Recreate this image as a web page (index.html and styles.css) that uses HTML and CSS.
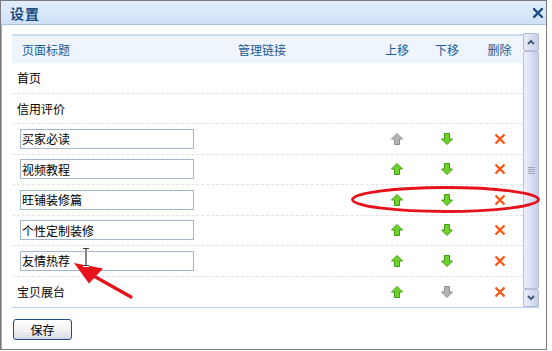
FILE: index.html
```html
<!DOCTYPE html>
<html lang="zh-CN">
<head>
<meta charset="utf-8">
<title>设置</title>
<link rel="stylesheet" href="styles.css">
</head>
<body>
<div class="dialog">
  <div class="titlebar">
    <span class="title">设置</span>
    <svg class="close" width="10" height="10" viewBox="0 0 10 10"><path d="M1 1 L9 9 M9 1 L1 9" stroke="#1d4d84" stroke-width="2.4" stroke-linecap="square"/></svg>
  </div>
  <div class="panel">
    <div class="table">
      <div class="header">
        <span class="h-title">页面标题</span>
        <span class="h-link">管理链接</span>
        <span class="c">上移</span>
        <span class="c">下移</span>
        <span class="c del">删除</span>
      </div>
      <div class="row"><span class="txt">首页</span></div>
      <div class="row"><span class="txt">信用评价</span></div>
      <div class="row">
        <span><input class="field" value="买家必读"></span><span></span>
        <span class="c"><svg class="ico" viewBox="0 0 12 12"><path class="up gray" d="M6 0.5 L11.5 6 L8.5 6 L8.5 11.5 L3.5 11.5 L3.5 6 L0.5 6 Z"/></svg></span>
        <span class="c"><svg class="ico" viewBox="0 0 12 12"><path class="dn green" d="M3.5 0.5 L8.5 0.5 L8.5 6 L11.5 6 L6 11.5 L0.5 6 L3.5 6 Z"/></svg></span>
        <span class="c del"><svg class="ico" viewBox="0 0 12 12"><path class="x" d="M1.5 1.5 L10.5 10.5 M10.5 1.5 L1.5 10.5"/></svg></span>
      </div>
      <div class="row">
        <span><input class="field" value="视频教程"></span><span></span>
        <span class="c"><svg class="ico" viewBox="0 0 12 12"><path class="up green" d="M6 0.5 L11.5 6 L8.5 6 L8.5 11.5 L3.5 11.5 L3.5 6 L0.5 6 Z"/></svg></span>
        <span class="c"><svg class="ico" viewBox="0 0 12 12"><path class="dn green" d="M3.5 0.5 L8.5 0.5 L8.5 6 L11.5 6 L6 11.5 L0.5 6 L3.5 6 Z"/></svg></span>
        <span class="c del"><svg class="ico" viewBox="0 0 12 12"><path class="x" d="M1.5 1.5 L10.5 10.5 M10.5 1.5 L1.5 10.5"/></svg></span>
      </div>
      <div class="row">
        <span><input class="field" value="旺铺装修篇"></span><span></span>
        <span class="c"><svg class="ico" viewBox="0 0 12 12"><path class="up green" d="M6 0.5 L11.5 6 L8.5 6 L8.5 11.5 L3.5 11.5 L3.5 6 L0.5 6 Z"/></svg></span>
        <span class="c"><svg class="ico" viewBox="0 0 12 12"><path class="dn green" d="M3.5 0.5 L8.5 0.5 L8.5 6 L11.5 6 L6 11.5 L0.5 6 L3.5 6 Z"/></svg></span>
        <span class="c del"><svg class="ico" viewBox="0 0 12 12"><path class="x" d="M1.5 1.5 L10.5 10.5 M10.5 1.5 L1.5 10.5"/></svg></span>
      </div>
      <div class="row">
        <span><input class="field" value="个性定制装修"></span><span></span>
        <span class="c"><svg class="ico" viewBox="0 0 12 12"><path class="up green" d="M6 0.5 L11.5 6 L8.5 6 L8.5 11.5 L3.5 11.5 L3.5 6 L0.5 6 Z"/></svg></span>
        <span class="c"><svg class="ico" viewBox="0 0 12 12"><path class="dn green" d="M3.5 0.5 L8.5 0.5 L8.5 6 L11.5 6 L6 11.5 L0.5 6 L3.5 6 Z"/></svg></span>
        <span class="c del"><svg class="ico" viewBox="0 0 12 12"><path class="x" d="M1.5 1.5 L10.5 10.5 M10.5 1.5 L1.5 10.5"/></svg></span>
      </div>
      <div class="row">
        <span><input class="field" value="友情热荐"></span><span></span>
        <span class="c"><svg class="ico" viewBox="0 0 12 12"><path class="up green" d="M6 0.5 L11.5 6 L8.5 6 L8.5 11.5 L3.5 11.5 L3.5 6 L0.5 6 Z"/></svg></span>
        <span class="c"><svg class="ico" viewBox="0 0 12 12"><path class="dn green" d="M3.5 0.5 L8.5 0.5 L8.5 6 L11.5 6 L6 11.5 L0.5 6 L3.5 6 Z"/></svg></span>
        <span class="c del"><svg class="ico" viewBox="0 0 12 12"><path class="x" d="M1.5 1.5 L10.5 10.5 M10.5 1.5 L1.5 10.5"/></svg></span>
      </div>
      <div class="row">
        <span class="txt">宝贝展台</span><span></span>
        <span class="c"><svg class="ico" viewBox="0 0 12 12"><path class="up green" d="M6 0.5 L11.5 6 L8.5 6 L8.5 11.5 L3.5 11.5 L3.5 6 L0.5 6 Z"/></svg></span>
        <span class="c"><svg class="ico" viewBox="0 0 12 12"><path class="dn gray" d="M3.5 0.5 L8.5 0.5 L8.5 6 L11.5 6 L6 11.5 L0.5 6 L3.5 6 Z"/></svg></span>
        <span class="c del"><svg class="ico" viewBox="0 0 12 12"><path class="x" d="M1.5 1.5 L10.5 10.5 M10.5 1.5 L1.5 10.5"/></svg></span>
      </div>
    </div>
    <div class="scrollbar">
      <div class="sbtn"><svg width="8" height="6" viewBox="0 0 8 6"><path d="M1 5 L4 2 L7 5" fill="none" stroke="#4a5b7c" stroke-width="2"/></svg></div>
      <div class="thumb"><span class="grip"></span><span class="grip"></span><span class="grip"></span><span class="grip"></span></div>
      <div class="sbtn"><svg width="8" height="6" viewBox="0 0 8 6"><path d="M1 1 L4 4 L7 1" fill="none" stroke="#4a5b7c" stroke-width="2"/></svg></div>
    </div>
  </div>
  <div class="footer">
    <button class="save">保存</button>
  </div>
</div>
<svg class="annot" width="552" height="351" viewBox="0 0 552 351">
  <ellipse cx="445.5" cy="199.5" rx="93" ry="12" fill="none" stroke="#e5121b" stroke-width="2.8"/>
  <path d="M131 297 L92 275" stroke="#e5121b" stroke-width="3.2" stroke-linecap="round"/>
  <path d="M74 263 L103 268.5 L89 283.5 Z" fill="#e5121b"/>
  <path d="M83 248.5 L89 248.5 M86 248.5 L86 265.5 M83 265.5 L89 265.5" stroke="#fff" stroke-width="3"/>
  <path d="M83 248.5 L89 248.5 M86 248.5 L86 265.5 M83 265.5 L89 265.5" stroke="#3a3a3a" stroke-width="1.2"/>
</svg>
</body>
</html>
```

FILE: styles.css
```css
body {
  margin: 0;
  position: relative;
  width: 552px;
  height: 351px;
  background: #ffffff;
  font-family: "Liberation Sans", "Noto Sans CJK SC", sans-serif;
  font-size: 12px;
  color: #000;
}

.dialog {
  width: 547px;
  height: 350px;
  box-sizing: border-box;
  border: 1px solid #7c7c7c;
  box-shadow: inset 1px 0 0 #a8a8a8;
  display: flex;
  flex-direction: column;
  background: #fff;
}

.titlebar {
  height: 23px;
  flex: none;
  background: linear-gradient(#e2edfc, #cfe1f8);
  border-bottom: 1px solid #a7c4ea;
  display: flex;
  align-items: center;
  justify-content: space-between;
  padding: 0 3px 0 9px;
}

.title {
  font-weight: bold;
  font-size: 14px;
  color: #1b4a80;
  letter-spacing: 1px;
}

.close {
  display: block;
}

.panel {
  margin: 8px 0 0 11px;
  width: 527px;
  display: flex;
  border-bottom: 1px solid #b8cfee;
}

.table {
  width: 511px;
  padding-top: 1px;
}

.header,
.row {
  display: grid;
  grid-template-columns: 215px 145px 50px 50px 51px;
  align-items: center;
}

.header {
  height: 27px;
  border-top: 2px solid #c7dcf5;
  background: #eff5fd;
  color: #215b97;
}

.h-title {
  padding-left: 10px;
}

.h-link {
  padding-left: 11px;
}

.c {
  display: flex;
  justify-content: center;
}

.del {
  padding-left: 4px;
}

.row {
  height: 30.5px;
  box-sizing: border-box;
  border-bottom: 1px dashed #e2e2e2;
}

.row:last-child {
  border-bottom: none;
}

.txt {
  padding-left: 5px;
}

.field {
  display: block;
  margin-left: 8px;
  width: 174px;
  height: 20px;
  box-sizing: border-box;
  border: 1px solid #a3b7d1;
  padding: 0 1px;
  font-family: "Liberation Sans", "Noto Sans CJK SC", sans-serif;
  font-size: 12px;
  color: #000;
  background: #fff;
}

.ico {
  width: 12px;
  height: 12px;
  display: block;
}

.green {
  fill: #6fd12b;
  stroke: #3f9e12;
  stroke-width: 1;
  stroke-linejoin: round;
}

.gray {
  fill: #b3b3b3;
  stroke: #8f8f8f;
  stroke-width: 1;
  stroke-linejoin: round;
}

.x {
  fill: none;
  stroke: #ff5412;
  stroke-width: 2.3;
}

.scrollbar {
  width: 16px;
  height: 274px;
  display: flex;
  flex-direction: column;
  background: #f3f3f7;
}

.sbtn {
  height: 18px;
  flex: none;
  box-sizing: border-box;
  border: 1px solid #b5bdd6;
  border-radius: 2px;
  background: linear-gradient(90deg, #e9ecf8, #c9d0ea);
  display: flex;
  align-items: center;
  justify-content: center;
}

.thumb {
  flex: 1;
  box-sizing: border-box;
  border: 1px solid #b9c0dc;
  border-radius: 2px;
  background: linear-gradient(90deg, #eef0fa, #dadef2 50%, #c7cde8);
  display: flex;
  flex-direction: column;
  align-items: center;
  justify-content: center;
  gap: 1px;
}

.grip {
  width: 7px;
  height: 1px;
  background: #9aa2bd;
}

.footer {
  padding: 11px 0 0 12px;
}

.save {
  width: 59px;
  height: 21px;
  box-sizing: border-box;
  border: 1px solid #1f4f86;
  border-radius: 3px;
  background: linear-gradient(#ffffff, #f1f1f4 55%, #d5d8e5);
  font-family: "Liberation Sans", "Noto Sans CJK SC", sans-serif;
  font-size: 12px;
  color: #000;
  padding: 0;
}

.annot {
  position: absolute;
  left: 0;
  top: 0;
  pointer-events: none;
}
```
